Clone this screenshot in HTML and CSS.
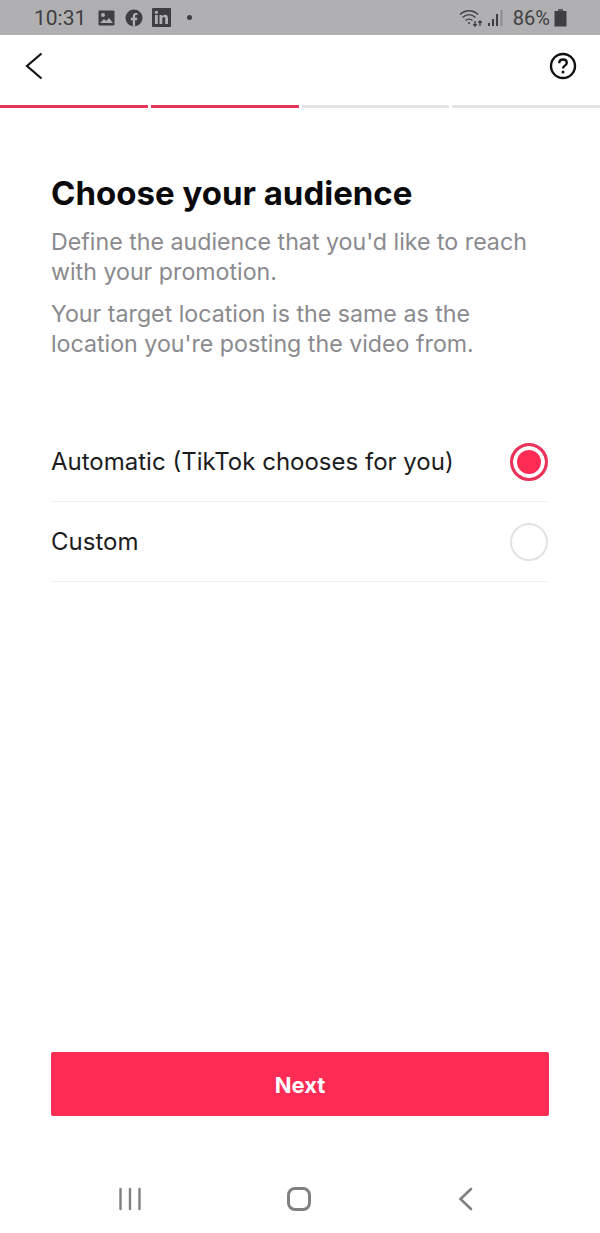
FILE: index.html
```html
<!DOCTYPE html>
<html lang="en">
<head>
  <meta charset="UTF-8">
  <meta name="viewport" content="width=device-width, initial-scale=1.0">
  <title>Choose your audience</title>
  <link rel="stylesheet" href="styles.css">
</head>
<body>
  <div id="screen">
    <div class="status-bar">
      <div class="status-left">
        <span class="time">10:31</span>
        <svg class="icon-pic" width="17" height="16" viewBox="0 0 17 16"><rect width="16" height="15" x="0.5" y="0.5" rx="1" fill="#3f3f41"/><circle cx="5" cy="5" r="2" fill="#b0b0b2"/><path d="M2 13l4-4 2 2 3-3 4 5z" fill="#b0b0b2"/></svg>
        <svg class="icon-fb" width="18" height="18" viewBox="0 0 18 18"><circle cx="9" cy="9" r="8.5" fill="#3f3f41"/><path d="M7.8 17.5v-6.3H5.8V8.8h2V7c0-2 1.200-3.100 3-3.100.9 0 1.600.1 1.600.1v2h-1c-1 0-1.300.6-1.300 1.200v1.600h2.300l-.4 2.400h-1.900v6.300z" fill="#b0b0b2"/></svg>
        <svg class="icon-in" width="19" height="19" viewBox="0 0 19 19"><rect width="19" height="19" rx="1" fill="#3f3f41"/><rect x="3" y="7" width="2.800" height="9" fill="#b0b0b2"/><circle cx="4.400" cy="4.300" r="1.600" fill="#b0b0b2"/><path d="M7.500 7h2.700v1.300c.5-.9 1.500-1.500 2.800-1.500 2.300 0 3 1.400 3 3.700V16h-2.800v-5c0-1.200-.3-1.900-1.300-1.900s-1.600.8-1.600 2V16H7.500z" fill="#b0b0b2"/></svg>
        <span class="dot"></span>
      </div>
      <div class="status-right">
        <svg width="24" height="20" viewBox="0 0 24 20" fill="none" stroke="#3f3f41" stroke-width="1.300"><path d="M1 6.500C6 1.500 14 1.500 19 6.500"/><path d="M3.500 9.500C7.500 6 12.500 6 16.500 9.500"/><path d="M6.500 12.500C8.700 10.700 11.300 10.700 13.500 12.500"/><circle cx="10" cy="15" r="1" fill="#3f3f41" stroke="none"/><path d="M16 13v5M14.300 16.200l1.700 1.800 1.700-1.800M21 18v-5M19.300 14.800l1.700-1.800 1.700 1.800"/></svg>
        <svg class="signal" width="16" height="18" viewBox="0 0 16 18"><rect x="0" y="14" width="2" height="3" fill="#3f3f41"/><rect x="4" y="10" width="2" height="7" fill="#3f3f41"/><rect x="8" y="5" width="2" height="12" fill="#3f3f41"/><rect x="12.500" y="1" width="2" height="16" fill="#8e8e90"/></svg>
        <span class="battery-text">86%</span>
        <svg width="13" height="18" viewBox="0 0 13 18"><rect x="4" y="0" width="5" height="2" fill="#58585a"/><rect x="0.500" y="2" width="12" height="15.500" fill="#3f3f41"/></svg>
      </div>
    </div>

    <div class="top-bar">
      <svg class="back" width="24" height="30" viewBox="0 0 24 30" fill="none" stroke="#111" stroke-width="2.200"><path d="M19.500 2.500L5 15l14.500 12.500"/></svg>
      <svg class="help" width="28" height="28" viewBox="0 0 28 28" fill="none" stroke="#111" stroke-width="2.400"><circle cx="14" cy="14" r="12"/><path d="M10.200 11.200c0-2.200 1.600-3.700 3.800-3.700s3.800 1.400 3.800 3.300c0 2.800-3.800 2.900-3.800 5.700" stroke-width="2.300"/><circle cx="14" cy="20" r="1.500" fill="#111" stroke="none"/></svg>
    </div>

    <div class="progress">
      <span class="step done"></span>
      <span class="step done"></span>
      <span class="step"></span>
      <span class="step"></span>
    </div>

    <div class="content">
      <h1>Choose your audience</h1>
      <p class="desc">Define the audience that you'd like to reach with your promotion.</p>
      <p class="desc second">Your target location is the same as the location you're posting the video from.</p>

      <div class="options">
        <div class="option">
          <span>Automatic (TikTok chooses for you)</span>
          <span class="radio checked"></span>
        </div>
        <div class="option">
          <span>Custom</span>
          <span class="radio"></span>
        </div>
      </div>
    </div>

    <div class="bottom">
      <button class="next-btn">Next</button>
    </div>

    <div class="nav-bar">
      <svg width="24" height="24" viewBox="0 0 24 24" fill="none" stroke="#808080" stroke-width="2.400" stroke-linecap="round"><path d="M2.500 2v20M12 2v20M21.500 2v20"/></svg>
      <svg width="26" height="24" viewBox="0 0 26 24" fill="none" stroke="#808080" stroke-width="3"><rect x="1.500" y="1.500" width="21" height="21" rx="6.500"/></svg>
      <svg width="16" height="24" viewBox="0 0 16 24" fill="none" stroke="#808080" stroke-width="2.600" stroke-linecap="round"><path d="M14 2L3.500 12 14 22"/></svg>
    </div>
  </div>
</body>
</html>
```

FILE: styles.css
```css
/* General Styling */
body {
  font-family: 'Inter', 'Roboto', sans-serif;
  background: white;
  color: #111;
  margin: 0;
  padding: 0;
}

#screen {
  width: 600px;
  height: 1233px;
  display: flex;
  flex-direction: column;
  overflow: hidden;
}

/* Status bar */
.status-bar {
  height: 35px;
  background: #b0b0b2;
  color: #3f3f41;
  display: flex;
  justify-content: space-between;
  align-items: center;
  padding: 0 33px 0 34px;
  flex-shrink: 0;
  font-family: 'Roboto', sans-serif;
}

.status-left,
.status-right {
  display: flex;
  align-items: center;
}

.time {
  font-size: 21px;
  width: 64px;
}

.icon-fb {
  margin-left: 10px;
}

.icon-in {
  margin-left: 9px;
}

.dot {
  width: 5px;
  height: 5px;
  border-radius: 50%;
  background: #3f3f41;
  margin-left: 16px;
}

.signal {
  margin-left: 5px;
}

.battery-text {
  font-size: 20px;
  margin: 0 4px 0 9px;
}

/* Top bar */
.top-bar {
  height: 70px;
  box-sizing: border-box;
  display: flex;
  justify-content: space-between;
  align-items: center;
  padding: 0 23px 8px 22px;
  flex-shrink: 0;
}

.progress {
  display: flex;
  gap: 3px;
  flex-shrink: 0;
}

.step {
  flex: 1;
  height: 3px;
  background: #e3e3e4;
}

.step.done {
  background: #e8345a;
}

/* Main content */
.content {
  flex: 1;
  padding: 0 51px;
}

h1 {
  font-size: 33px;
  font-weight: 700;
  color: #0a0a0c;
  margin: 66px 0 0;
  line-height: 38px;
}

.desc {
  font-size: 23.200px;
  line-height: 30px;
  color: #8a8a8e;
  margin: 15px 0 0;
}

.desc.second {
  margin-top: 12px;
}

.options {
  margin-top: 63px;
  margin-right: 1px;
}

.option {
  height: 80px;
  display: flex;
  justify-content: space-between;
  align-items: center;
  border-bottom: 1px solid #f0f0f1;
  font-size: 24px;
  color: #1c1c1e;
  box-sizing: border-box;
}

.radio {
  width: 38px;
  height: 38px;
  box-sizing: border-box;
  border: 2.500px solid #e2e2e3;
  border-radius: 50%;
}

.radio.checked {
  border: 3px solid #e8345a;
  background: #fe2c55;
  box-shadow: inset 0 0 0 4px white;
}

/* Bottom */
.bottom {
  padding: 0 51px;
  flex-shrink: 0;
}

.next-btn {
  width: 100%;
  height: 64px;
  background: #fe2c55;
  color: white;
  border: none;
  border-radius: 2px;
  padding-top: 2px;
  font-family: inherit;
  font-size: 22px;
  font-weight: 700;
  cursor: pointer;
}

.nav-bar {
  height: 117px;
  display: flex;
  justify-content: space-between;
  align-items: center;
  padding: 49px 127px 0 118px;
  box-sizing: border-box;
  flex-shrink: 0;
}
```
